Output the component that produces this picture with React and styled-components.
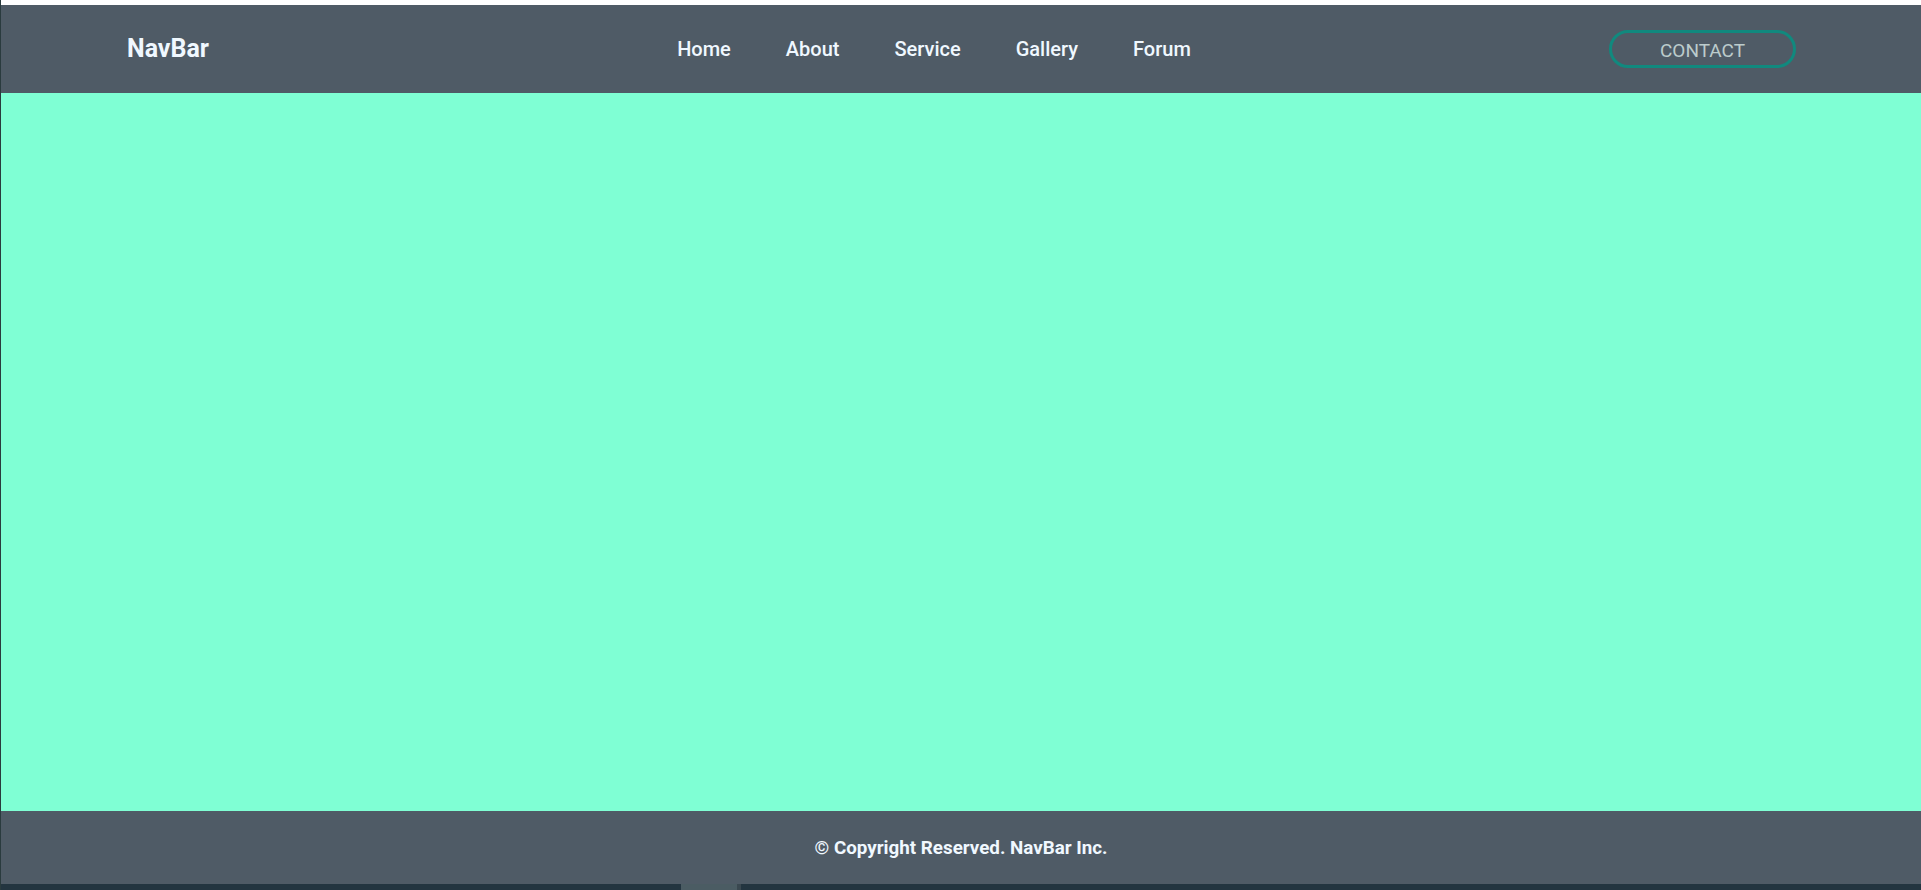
import React from 'react';
import styled, { createGlobalStyle } from 'styled-components';

const GlobalStyle = createGlobalStyle`
  html, body {
    margin: 0;
    padding: 0;
    background: #ffffff;
  }
  body {
    font-family: Roboto, "Liberation Sans", sans-serif;
  }
`

const Page = styled.div`
  display: flex;
  flex-direction: column;
  height: 890px;
  padding-top: 5px;
  box-sizing: border-box;
  border-left: 1px solid #2a3b3e;
`

const Header = styled.header`
  display: flex;
  align-items: center;
  justify-content: space-between;
  height: 88px;
  padding: 0 125px 0 126px;
  background: #4f5b66;
  flex-shrink: 0;
`

const Logo = styled.div`
  color: #f0f8ff;
  font-size: 25px;
  font-weight: 700;
  margin-top: -1px;
`

const NavList = styled.ul`
  display: flex;
  gap: 55px;
  list-style: none;
  margin: 0;
  padding: 0 0 0 50px;
`

const NavItem = styled.li`
  color: #f0f8ff;
  font-size: 20px;
  font-weight: 500;
  cursor: pointer;
`

const ContactButton = styled.button`
  width: 187px;
  height: 38px;
  padding: 3px 0 0;
  border: 3px solid #11897e;
  border-radius: 19px;
  background: transparent;
  color: #bccccc;
  font-family: Roboto, "Liberation Sans", sans-serif;
  font-size: 19px;
  font-weight: 400;
  cursor: pointer;
`

const Main = styled.main`
  flex: 1;
  background: #7fffd4;
`

const Footer = styled.footer`
  display: flex;
  align-items: center;
  justify-content: center;
  height: 73px;
  background: #4f5b66;
  color: #f0f8ff;
  font-size: 18.8px;
  font-weight: 700;
  flex-shrink: 0;
`

const BottomStrip = styled.div`
  display: flex;
  height: 6px;
  background: #233540;
  flex-shrink: 0;
`

const StripBlock = styled.div`
  width: ${p => p.w}px;
  margin-left: ${p => p.ml || 0}px;
  background: ${p => p.color};
`

const links = ['Home', 'About', 'Service', 'Gallery', 'Forum']

export default function App() {
  return (
    <>
      <GlobalStyle />
      <Page>
        <Header>
          <Logo>NavBar</Logo>
          <NavList>
            {links.map(link => (
              <NavItem key={link}>{link}</NavItem>
            ))}
          </NavList>
          <ContactButton>CONTACT</ContactButton>
        </Header>
        <Main />
        <Footer>© Copyright Reserved. NavBar Inc.</Footer>
        <BottomStrip>
          <StripBlock ml={680} w={56} color="#4b5c63" />
          <StripBlock w={4} color="#3a4850" />
        </BottomStrip>
      </Page>
    </>
  )
}
